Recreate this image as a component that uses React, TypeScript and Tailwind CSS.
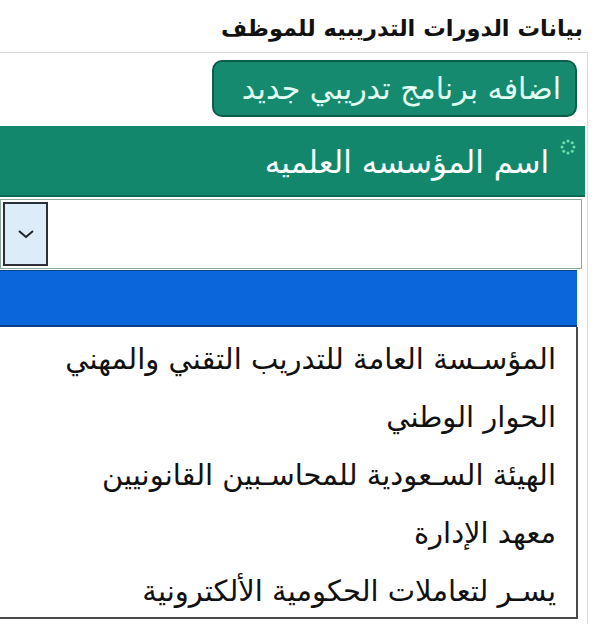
import React from "react";

const options = [
  "المؤسـسة العامة للتدريب التقني والمهني",
  "الحوار الوطني",
  "الهيئة السـعودية للمحاسـبين القانونيين",
  "معهد الإدارة",
  "يسـر لتعاملات الحكومية الألكترونية",
];

function Star() {
  const dots = [];
  for (let i = 0; i < 8; i++) {
    const a = (i / 8) * Math.PI * 2;
    dots.push(
      <circle key={i} cx={9 + Math.cos(a) * 6} cy={9 + Math.sin(a) * 6} r={1.5} fill="#6fdcae" />
    );
  }
  return (
    <svg width="18" height="18" viewBox="0 0 18 18">
      {dots}
    </svg>
  );
}

export default function App() {
  const font = { fontFamily: '"DejaVu Sans", "Noto Sans", sans-serif' };
  return (
    <div className="w-[600px] h-[624px] overflow-hidden bg-white" style={font}>
      <div className="h-[52px] flex items-center justify-end pr-[17px] pt-[4px]">
        <span dir="rtl" className="text-[22.5px] font-bold text-[#111] leading-none">
          بيانات الدورات التدريبيه للموظف
        </span>
      </div>
      <div className="w-[588px] border-t border-r border-[#dcdcdc] h-[572px]">
        <div className="ml-[212px] mt-[7px] w-[365px] h-[57px] rounded-[10px] bg-[#168a6f] border-2 border-[#0c5e4b] flex items-center justify-end pr-[14px]">
          <span dir="rtl" className="text-[30px] text-[#e2fff4] leading-none">
            اضافه برنامج تدريبي جديد
          </span>
        </div>
        <div className="mt-[9px] w-[585px] h-[71px] bg-[#12876c] border-b-2 border-[#0c6a55] flex justify-end pr-[8px]">
          <div className="flex items-center h-full">
            <span dir="rtl" className="text-[31px] text-white leading-none mt-[4px]">
              اسم المؤسسه العلميه
            </span>
          </div>
          <div className="mt-[12px] ml-[10px]">
            <Star />
          </div>
        </div>
        <div className="mt-[2px] w-[582px] h-[70px] bg-white border border-[#8aa89c] flex">
          <div className="ml-[2px] mt-[2px] w-[45px] h-[64px] bg-[#dcecf8] border-2 border-[#2b2f36] flex items-center justify-center">
            <svg width="20" height="12" viewBox="0 0 20 12">
              <path d="M3 3 L10 9 L17 3" fill="none" stroke="#222" strokeWidth="2" />
            </svg>
          </div>
        </div>
        <div className="mt-[1px] w-[577px] h-[57px] bg-[#0a66da] border-t border-b-2 border-[#0a3f8a]" />
        <div className="w-[578px] border-r-2 border-b-2 border-[#4a4a4a] bg-white">
          {options.map((o) => (
            <div key={o} className="h-[58px] flex items-center justify-end pr-[20px]">
              <span dir="rtl" className="text-[29px] text-[#111] leading-none mt-[6px]">
                {o}
              </span>
            </div>
          ))}
        </div>
      </div>
    </div>
  );
}
